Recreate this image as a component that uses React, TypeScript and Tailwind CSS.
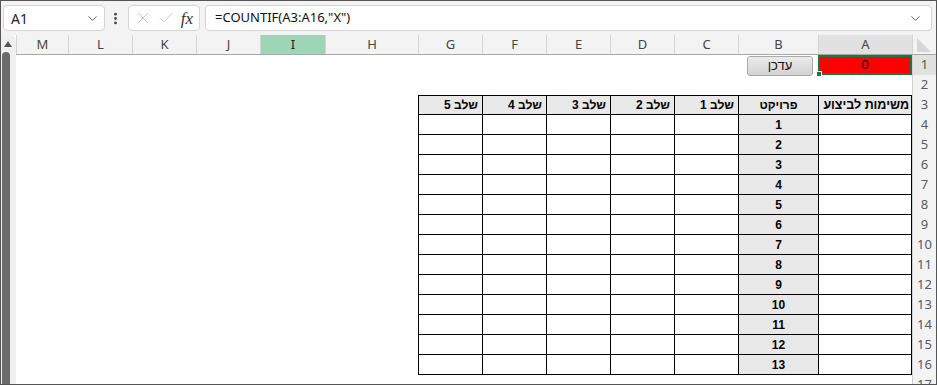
import { ChevronDown, EllipsisVertical, X, Check } from 'lucide-react';

const columns = [
  { key: 'A', w: 'w-[94px]' },
  { key: 'B', w: 'w-[80px]' },
  { key: 'C', w: 'w-[64px]' },
  { key: 'D', w: 'w-[64px]' },
  { key: 'E', w: 'w-[64px]' },
  { key: 'F', w: 'w-[64px]' },
  { key: 'G', w: 'w-[64px]' },
  { key: 'H', w: 'w-[93px]' },
  { key: 'I', w: 'w-[65px]' },
  { key: 'J', w: 'w-[64px]' },
  { key: 'K', w: 'w-[64px]' },
  { key: 'L', w: 'w-[64px]' },
  { key: 'M', w: 'w-[52px]' },
];

const tableCols = ['A', 'B', 'C', 'D', 'E', 'F', 'G'];
const headers: Record<string, string> = {
  A: 'משימות לביצוע',
  B: 'פרויקט',
  C: 'שלב 1',
  D: 'שלב 2',
  E: 'שלב 3',
  F: 'שלב 4',
  G: 'שלב 5',
};

const rows = Array.from({ length: 17 }, (_, i) => i + 1);

function Cell({ col, row }: { col: string; row: number }) {
  const inTable = tableCols.includes(col) && row >= 3 && row <= 16;

  if (col === 'A' && row === 1) {
    return (
      <div className="relative h-full bg-[#ff0000] border-2 border-[#217346] flex items-center justify-center text-[13px] text-black">
        0
        <span className="absolute -left-[4px] -bottom-[4px] w-[6px] h-[6px] bg-[#217346] border border-white" />
      </div>
    );
  }

  if (!inTable) return <div className="h-full" />;

  const isHeader = row === 3;
  const isProject = col === 'B';
  const cls = [
    'h-full border-b border-l border-black flex items-center whitespace-nowrap font-bold text-black',
    row === 3 ? 'border-t' : '',
    col === 'A' ? 'border-r pr-[2px] text-[12.5px]' : 'text-[12px]',
    isHeader || isProject ? 'bg-[#e8e8e8]' : 'bg-white',
    isProject ? 'justify-center' : col === 'A' ? 'justify-start' : 'justify-start pr-[4px]',
  ].join(' ');

  return (
    <div className={cls}>
      {isHeader ? headers[col] : isProject ? row - 3 : ''}
    </div>
  );
}

export default function App() {
  return (
    <div
      className="w-[937px] h-[385px] border border-[#555] bg-white overflow-hidden flex flex-col"
      style={{ fontFamily: '"Liberation Sans", Arial, sans-serif' }}
    >
      {/* formula bar */}
      <div
        className="h-[34px] shrink-0 bg-[#f3f3f3] flex items-center px-[2px]"
        style={{ fontFamily: '"Noto Sans", "Open Sans", sans-serif' }}
      >
        <div className="w-[102px] h-[26px] bg-white border border-[#d4d4d4] rounded-[4px] flex items-center justify-between pl-[7px] pr-[4px]">
          <span className="text-[14px] text-[#222]">A1</span>
          <ChevronDown size={15} strokeWidth={1.5} className="text-[#555]" />
        </div>
        <EllipsisVertical size={15} strokeWidth={2.5} className="text-[#444] ml-[3px]" />
        <div className="ml-[5px] w-[72px] h-[26px] bg-white border border-[#d4d4d4] rounded-[4px] flex items-center justify-between pl-[5px] pr-[6px]">
          <X size={18} strokeWidth={1} className="text-[#b0b0b0]" />
          <Check size={18} strokeWidth={1} className="text-[#b0b0b0]" />
          <span className="text-[17px] italic text-[#333] leading-none" style={{ fontFamily: '"Liberation Serif", serif' }}>
            fx
          </span>
        </div>
        <div className="ml-[5px] flex-1 h-[26px] bg-white border border-[#d4d4d4] rounded-[4px] flex items-center justify-between pl-[9px] pr-[8px] mr-[2px]">
          <span className="text-[13px] text-[#111]">=COUNTIF(A3:A16,"X")</span>
          <ChevronDown size={15} strokeWidth={1.5} className="text-[#555]" />
        </div>
      </div>

      {/* sheet */}
      <div className="flex-1 flex min-h-0">
        {/* left scrollbar */}
        <div className="w-[15px] shrink-0 bg-[#f0f0f0] rounded-tr-[6px] relative">
          <div className="absolute left-[3px] top-[6px] w-0 h-0 border-l-[4px] border-r-[4px] border-b-[6px] border-l-transparent border-r-transparent border-b-[#555]" />
          <div className="absolute left-[1px] top-[17px] w-[8px] bottom-0 bg-[#6b6b6b] rounded-t-[4px]" />
        </div>

        <div dir="rtl" className="flex-1 flex flex-col relative">
          {/* column headers */}
          <div
            className="flex h-[20px] shrink-0 border-b border-[#a8a8a8] bg-[#f3f3f3]"
            style={{ fontFamily: '"Noto Sans", "Open Sans", sans-serif' }}
          >
            <div className="w-[24px] shrink-0 relative border-l border-[#d4d4d4]">
              <div className="absolute left-[4px] bottom-[2px] w-0 h-0 border-b-[14px] border-r-[14px] border-b-[#d6d6d6] border-r-transparent" />
            </div>
            {columns.map((c) => (
              <div
                key={c.key}
                className={`${c.w} shrink-0 flex items-center justify-center text-[13px] border-l border-[#d4d4d4] ${
                  c.key === 'I'
                    ? 'bg-[#9fd5b7] text-[#222]'
                    : c.key === 'A'
                    ? 'bg-[#e1e1e1] text-[#444]'
                    : 'text-[#444]'
                }`}
              >
                {c.key}
              </div>
            ))}
          </div>

          {/* rows */}
          {rows.map((r) => (
            <div key={r} className="flex h-[20px] shrink-0">
              <div
                className={`w-[24px] shrink-0 flex items-center justify-center text-[13px] border-l border-[#d0d0d0] ${
                  r === 1 ? 'bg-[#e1e1e1] text-[#217346]' : 'bg-[#f3f3f3] text-[#555a66]'
                }`}
                style={{ fontFamily: '"Noto Sans", "Open Sans", sans-serif' }}
              >
                {r}
              </div>
              {columns.map((c) => (
                <div key={c.key} className={`${c.w} shrink-0 h-full`}>
                  <Cell col={c.key} row={r} />
                </div>
              ))}
            </div>
          ))}

          {/* update button control over B1 */}
          <button className="absolute right-[123px] top-[21px] w-[66px] h-[20px] rounded-[3px] border border-[#a9a9a9] bg-gradient-to-b from-[#ececec] to-[#d2d2d2] text-[13px] text-[#111] flex items-center justify-center">
            עדכן
          </button>
        </div>
      </div>
    </div>
  );
}
